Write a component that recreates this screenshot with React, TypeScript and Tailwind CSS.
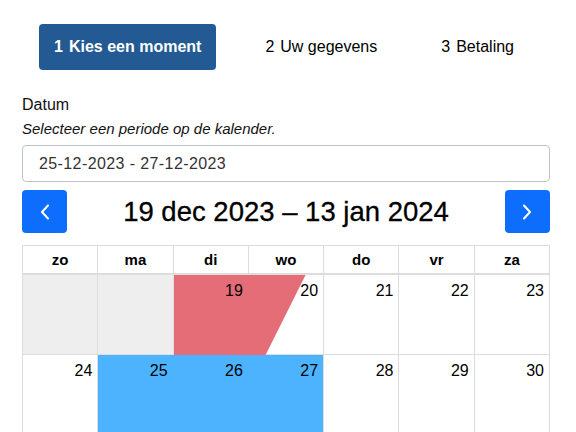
import {useState} from "react";

const steps = [
    {nr: 1, label: 'Kies een moment'},
    {nr: 2, label: 'Uw gegevens'},
    {nr: 3, label: 'Betaling'},
];

const dayNames = ['zo', 'ma', 'di', 'wo', 'do', 'vr', 'za'];

interface Day {
    label: string
    past?: boolean
    selected?: boolean
}

const weeks: Day[][] = [
    [{label: '', past: true}, {label: '', past: true}, {label: '19'}, {label: '20'}, {label: '21'}, {label: '22'}, {label: '23'}],
    [{label: '24'}, {label: '25', selected: true}, {label: '26', selected: true}, {label: '27', selected: true}, {label: '28'}, {label: '29'}, {label: '30'}],
    [{label: '31'}, {label: '1'}, {label: '2'}, {label: '3'}, {label: '4'}, {label: '5'}, {label: '6'}],
    [{label: '7'}, {label: '8'}, {label: '9'}, {label: '10'}, {label: '11'}, {label: '12'}, {label: '13'}],
];

function Chevron({dir}: {dir: 'left' | 'right'}) {
    return (
        <svg width="10" height="16" viewBox="0 0 10 16" fill="none" stroke="white" strokeWidth="2" strokeLinecap="round" strokeLinejoin="round">
            {dir === 'left' ? <path d="M8 1.5 L2 8 L8 14.5" /> : <path d="M2 1.5 L8 8 L2 14.5" />}
        </svg>
    );
}

export default function App() {
    const [step] = useState(1);

    return (
        <div className="min-h-screen bg-white pl-[22px] pr-[26px] pt-6 font-['Liberation_Sans',Arial,sans-serif] text-black">
            <div className="flex gap-[34px] pl-[17px]">
                {steps.map((s) => (
                    <div
                        key={s.nr}
                        className={s.nr === step
                            ? "rounded-[4px] bg-[#235a93] px-[15px] py-3 text-base leading-[22px] font-bold text-white"
                            : "px-[15px] py-3 text-base leading-[22px] text-black"}
                    >
                        <span className="mr-[6px]">{s.nr}</span>{s.label}
                    </div>
                ))}
            </div>

            <div className="mt-[23px] text-base leading-6 text-[#111]">Datum</div>
            <div className="mt-[2px] text-[15px] leading-5 italic text-[#111]">Selecteer een periode op de kalender.</div>

            <div className="mt-[6px] flex h-[37px] items-center rounded-[4px] border border-[#bcc3cb] px-4 text-base tracking-[0.4px] text-[#333]">
                25-12-2023 - 27-12-2023
            </div>

            <div className="mt-2 flex h-[43px] items-center justify-between">
                <button className="flex h-[43px] w-[45px] items-center justify-center rounded-[4px] bg-[#0d6efd]">
                    <Chevron dir="left" />
                </button>
                <h2 className="text-[27.5px] leading-[34px] text-black [-webkit-text-stroke:0.3px_black]">19 dec 2023 – 13 jan 2024</h2>
                <button className="flex h-[43px] w-[45px] items-center justify-center rounded-[4px] bg-[#0d6efd]">
                    <Chevron dir="right" />
                </button>
            </div>

            <div className="mt-3 border-l border-t border-[#dddddd]">
                <div className="grid grid-cols-7 border-b-2 border-[#dddddd]">
                    {dayNames.map((d) => (
                        <div key={d} className="h-[27px] border-r border-[#dddddd] text-center text-[15px] leading-[27px] font-bold">
                            {d}
                        </div>
                    ))}
                </div>
                {weeks.map((week, wi) => (
                    <div key={wi} className="relative grid grid-cols-7">
                        {week.map((day, di) => {
                            const nextSelected = week[di + 1]?.selected;
                            let cls = "h-20 border-b border-r border-[#dddddd] pr-[5px] pt-1 text-right text-base leading-6";
                            if (day.past) cls += " bg-[#eeeeee]";
                            if (day.selected) cls += nextSelected ? " bg-[#4db3fe] border-r-[#4db3fe] border-b-[#4db3fe]" : " bg-[#4db3fe] border-b-[#4db3fe]";
                            return (
                                <div key={di} className={cls}>
                                    <span className="relative z-10">{day.label}</span>
                                </div>
                            );
                        })}
                        {wi === 0 && (
                            <div className="absolute left-[calc(200%/7)] top-0 h-full w-[132px] bg-[#e46d78] [clip-path:polygon(0_0,100%_0,calc(100%-40px)_100%,0_100%)]" />
                        )}
                    </div>
                ))}
            </div>
        </div>
    );
}
